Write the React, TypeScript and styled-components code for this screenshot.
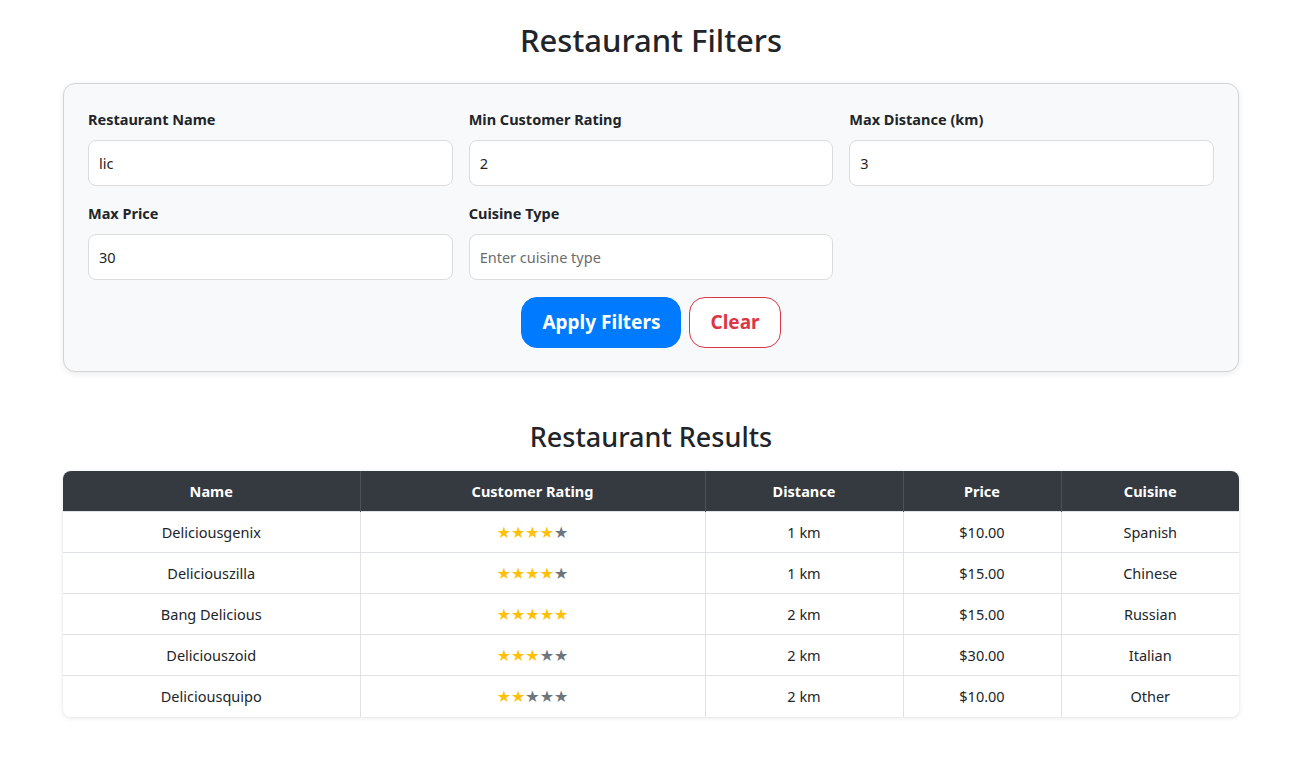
import React, { FC } from 'react';
import styled, { createGlobalStyle } from 'styled-components';

const GlobalStyle = createGlobalStyle`
  body {
    margin: 0;
    background: #ffffff;
    color: #212529;
    font-family: 'Noto Sans', 'Open Sans', sans-serif;
  }
  * { box-sizing: border-box; }
`;

const Page = styled.div`
  width: 1176px;
  margin: 0 0 0 63px;
  padding: 21px 0 40px;
`;

const Title = styled.h1<{ size: number }>`
  margin: 0;
  text-align: center;
  font-size: ${({ size }) => size}px;
  font-weight: 500;
  line-height: 1.25;
  color: #212529;
`;

const Panel = styled.div`
  margin: 23px 0 48px;
  background: #f8f9fa;
  border: 1px solid #d3d3d3;
  border-radius: 12px;
  padding: 25px 24px 23px;
  box-shadow: 0 2px 6px rgba(0, 0, 0, 0.08);
`;

const FieldGrid = styled.div`
  display: grid;
  grid-template-columns: repeat(3, 1fr);
  column-gap: 16px;
  row-gap: 17px;
`;

const Field = styled.div`
  display: flex;
  flex-direction: column;
`;

const Label = styled.label`
  font-size: 14.5px;
  font-weight: 700;
  line-height: 20px;
  margin-bottom: 11px;
  color: #212529;
`;

const Input = styled.input`
  height: 46px;
  padding: 0 10px;
  border: 1px solid #dcdcdc;
  border-radius: 8px;
  background: #fff;
  font-family: inherit;
  font-size: 14.5px;
  color: #212529;
  &::placeholder { color: #6c6c6c; }
`;

const Actions = styled.div`
  display: flex;
  justify-content: center;
  gap: 8px;
  margin-top: 17px;
`;

const Button = styled.button<{ variant: 'primary' | 'danger' }>`
  height: 51px;
  padding: 0 20px;
  border-radius: 16px;
  font-family: inherit;
  font-size: 19px;
  font-weight: 700;
  cursor: pointer;
  border: 1px solid ${({ variant }) => (variant === 'primary' ? '#007bff' : '#dc3545')};
  background: ${({ variant }) => (variant === 'primary' ? '#007bff' : '#ffffff')};
  color: ${({ variant }) => (variant === 'primary' ? '#ffffff' : '#dc3545')};
`;

const TableWrap = styled.div`
  margin-top: 17px;
  border-radius: 8px;
  overflow: hidden;
  box-shadow: 0 1px 4px rgba(0, 0, 0, 0.12);
`;

const Table = styled.table`
  width: 100%;
  border-collapse: collapse;
  font-size: 14.5px;
`;

const Th = styled.th<{ w: number }>`
  width: ${({ w }) => w}px;
  height: 41px;
  background: #343a40;
  color: #fff;
  font-weight: 700;
  text-align: center;
  border-left: 1px solid #4b5157;
  &:first-child { border-left: none; }
`;

const Td = styled.td`
  height: 41px;
  text-align: center;
  border-top: 1px solid #dee2e6;
  border-left: 1px solid #dee2e6;
  &:first-child { border-left: none; }
`;

const Star = styled.span<{ on: boolean }>`
  color: ${({ on }) => (on ? '#ffc107' : '#6c757d')};
  font-size: 16px;
  font-family: 'DejaVu Sans', sans-serif;
`;

const Stars: FC<{ value: number }> = ({ value }) => (
  <span>
    {[1, 2, 3, 4, 5].map((i) => (
      <Star key={i} on={i <= value}>★</Star>
    ))}
  </span>
);

const columns = [
  { label: 'Name', width: 297 },
  { label: 'Customer Rating', width: 345 },
  { label: 'Distance', width: 198 },
  { label: 'Price', width: 158 },
  { label: 'Cuisine', width: 178 },
];

const rows = [
  { name: 'Deliciousgenix', rating: 4, distance: '1 km', price: '$10.00', cuisine: 'Spanish' },
  { name: 'Deliciouszilla', rating: 4, distance: '1 km', price: '$15.00', cuisine: 'Chinese' },
  { name: 'Bang Delicious', rating: 5, distance: '2 km', price: '$15.00', cuisine: 'Russian' },
  { name: 'Deliciouszoid', rating: 3, distance: '2 km', price: '$30.00', cuisine: 'Italian' },
  { name: 'Deliciousquipo', rating: 2, distance: '2 km', price: '$10.00', cuisine: 'Other' },
];

const App: FC = () => (
  <>
    <GlobalStyle />
    <Page>
      <Title size={31}>Restaurant Filters</Title>
      <Panel>
        <FieldGrid>
          <Field>
            <Label>Restaurant Name</Label>
            <Input defaultValue="lic" />
          </Field>
          <Field>
            <Label>Min Customer Rating</Label>
            <Input defaultValue="2" />
          </Field>
          <Field>
            <Label>Max Distance (km)</Label>
            <Input defaultValue="3" />
          </Field>
          <Field>
            <Label>Max Price</Label>
            <Input defaultValue="30" />
          </Field>
          <Field>
            <Label>Cuisine Type</Label>
            <Input placeholder="Enter cuisine type" />
          </Field>
        </FieldGrid>
        <Actions>
          <Button variant="primary">Apply Filters</Button>
          <Button variant="danger">Clear</Button>
        </Actions>
      </Panel>
      <Title size={27}>Restaurant Results</Title>
      <TableWrap>
        <Table>
          <thead>
            <tr>
              {columns.map((c) => (
                <Th key={c.label} w={c.width}>{c.label}</Th>
              ))}
            </tr>
          </thead>
          <tbody>
            {rows.map((r) => (
              <tr key={r.name}>
                <Td>{r.name}</Td>
                <Td><Stars value={r.rating} /></Td>
                <Td>{r.distance}</Td>
                <Td>{r.price}</Td>
                <Td>{r.cuisine}</Td>
              </tr>
            ))}
          </tbody>
        </Table>
      </TableWrap>
    </Page>
  </>
);

export default App;
